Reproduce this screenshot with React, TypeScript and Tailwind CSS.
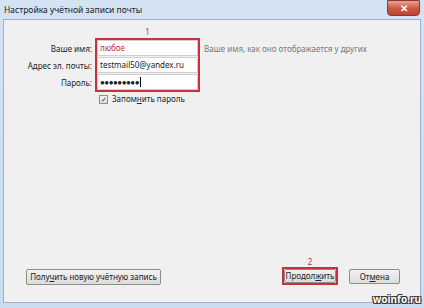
import React from "react";

const font = { fontFamily: '"Noto Sans", "Open Sans", "Liberation Sans", sans-serif' };

export default function App() {
  return (
    <div
      className="relative w-[424px] h-[308px] flex flex-col bg-gradient-to-b from-[#d3e3f4] to-[#c9dcf0] text-[#1e1e1e] overflow-hidden"
      style={font}
    >
      {/* title bar */}
      <div className="h-[19px] flex items-start shrink-0">
        <div className="pl-[4px] pt-[4px] text-[8.5px] leading-[12px] text-[#222] whitespace-nowrap">Настройка учётной записи почты</div>
        <div className="ml-auto mr-[4px] w-[33px] h-[16px] rounded-b-[4px] border border-[#8a3a32] bg-gradient-to-b from-[#e8a196] via-[#cf5a48] to-[#c0412f] flex items-center justify-center text-white text-[10px] font-bold leading-none">
          ✕
        </div>
      </div>
      {/* content */}
      <div className="flex-1 mx-[3px] mb-[5px] border border-[#9fb2c7] bg-[#f0f0f0] flex flex-col">
        <div className="flex pt-[6px]">
          {/* labels */}
          <div className="w-[88px] flex flex-col items-end pt-[14px] text-[8px] text-[#222] whitespace-nowrap">
            <div className="h-[17px] leading-[17px]">Ваше имя:</div>
            <div className="h-[17px] leading-[17px]">Адрес эл. почты:</div>
            <div className="h-[17px] leading-[17px]">Пароль:</div>
          </div>
          <div className="flex flex-col ml-[3px]">
            <div className="h-[12px] text-center text-[8px] leading-[12px] text-[#c0303a]">1</div>
            <div className="w-[105px] border-2 border-[#c8323c] flex flex-col gap-[1px]">
              <div className="h-[16px] bg-white border border-[#d0d0d0] px-[2px] text-[8px] leading-[14px] text-[#c0303a]">любое</div>
              <div className="h-[16px] bg-white border border-[#d0d0d0] px-[2px] text-[8px] leading-[14px] text-[#222] whitespace-nowrap">testmail50@yandex.ru</div>
              <div className="h-[16px] bg-white border border-[#d0d0d0] px-[2px] text-[8px] leading-[14px] text-[#222] flex items-center">
                <span className="tracking-[-0.5px]">●●●●●●●●●</span>
                <span className="w-[1px] h-[10px] bg-black ml-[1px]" />
              </div>
            </div>
            <div className="flex items-center mt-[2px] ml-[4px] h-[10px]">
              <div className="w-[9px] h-[9px] border border-[#8f8f8f] bg-gradient-to-b from-[#f4f4f4] to-[#dcdcdc] flex items-center justify-center text-[7px] leading-none text-[#333]">✓</div>
              <span className="ml-[4px] text-[8px] leading-[10px] text-[#222] whitespace-nowrap">
                Запом<u>н</u>ить пароль
              </span>
            </div>
          </div>
          <div className="ml-[4px] pt-[14px] text-[8px] leading-[17px] text-[#777] whitespace-nowrap">Ваше имя, как оно отображается у других</div>
        </div>
        <div className="flex-1" />
        <div className="flex items-end pb-[17px]">
          <div className="ml-[22px] h-[16px] border border-[#8c8c8c] rounded-[2px] bg-gradient-to-b from-[#f2f2f2] to-[#dcdcdc] text-[8px] leading-[14px] text-[#222] w-[135px] text-center whitespace-nowrap">
            Полу<u>ч</u>ить новую учётную запись
          </div>
          <div className="ml-auto flex flex-col items-center">
            <div className="text-[8px] leading-[10px] text-[#c0303a]">2</div>
            <div className="border-2 border-[#c8323c]">
              <div className="h-[14px] w-[52px] border border-[#8c8c8c] rounded-[2px] bg-gradient-to-b from-[#f2f2f2] to-[#dcdcdc] text-[8px] leading-[12px] text-[#222] text-center whitespace-nowrap">
                Продол<u>ж</u>ить
              </div>
            </div>
          </div>
          <div className="ml-[11px] mr-[20px] mb-[1px] h-[15px] w-[51px] border border-[#8c8c8c] rounded-[2px] bg-gradient-to-b from-[#f2f2f2] to-[#dcdcdc] text-[8px] leading-[13px] text-[#222] text-center whitespace-nowrap">
            От<u>м</u>ена
          </div>
        </div>
      </div>
      <div className="absolute right-[3px] bottom-[4px] text-[10px] font-bold leading-none text-white [text-shadow:_1px_1px_0_#333,_-1px_-1px_0_#333,_1px_-1px_0_#333,_-1px_1px_0_#333]">
        woinfo.ru
      </div>
    </div>
  );
}
